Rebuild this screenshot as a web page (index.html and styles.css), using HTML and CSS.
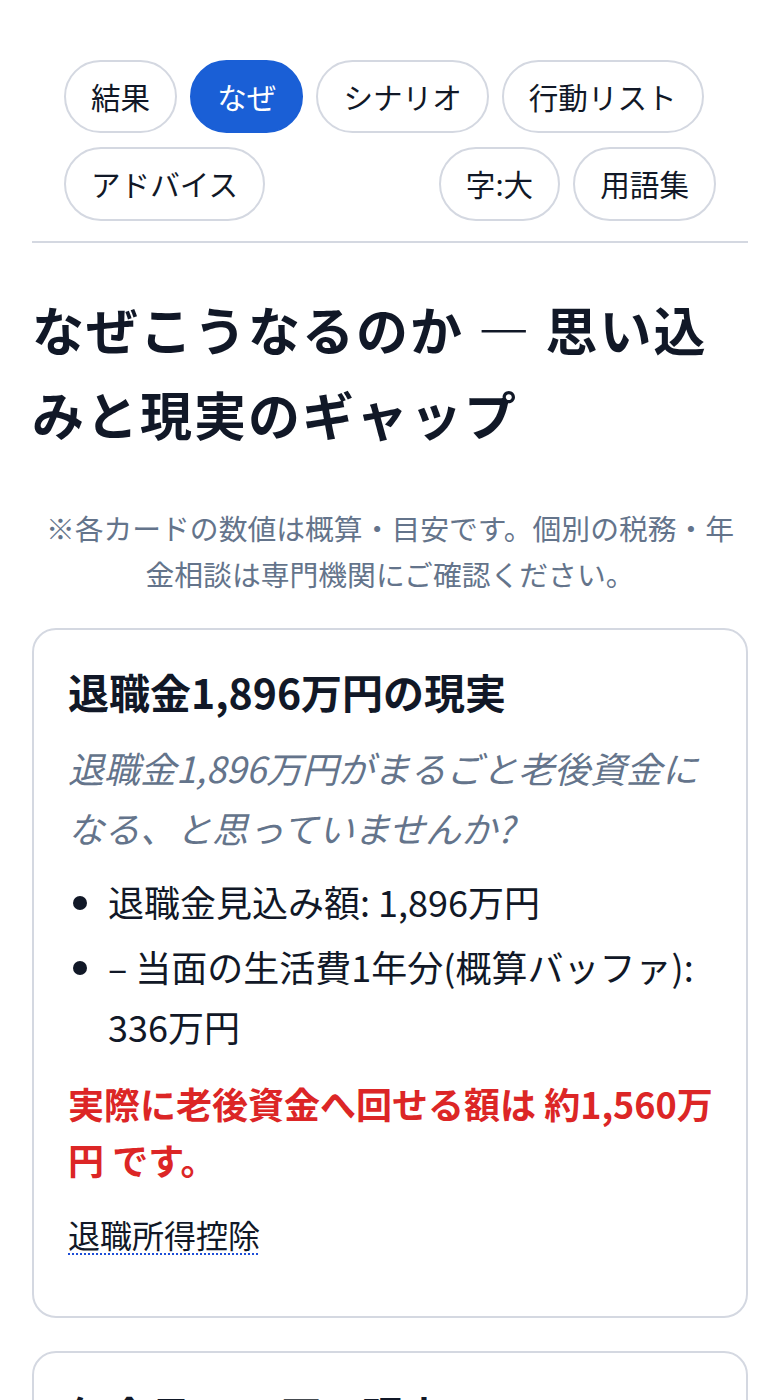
FILE: index.html
```html
<!DOCTYPE html>
<html lang="ja">
<head>
    <meta charset="UTF-8">
    <meta name="viewport" content="width=device-width, initial-scale=1.0">
    <title>なぜこうなるのか</title>
    <link rel="stylesheet" href="styles.css">
</head>
<body>
    <div class="page">
        <nav class="tabs">
            <button class="tab">結果</button>
            <button class="tab active">なぜ</button>
            <button class="tab">シナリオ</button>
            <button class="tab">行動リスト</button>
            <button class="tab">アドバイス</button>
            <button class="tab tool-first">字:大</button>
            <button class="tab">用語集</button>
        </nav>

        <h1 class="title">なぜこうなるのか — 思い込みと現実のギャップ</h1>

        <p class="note">※各カードの数値は概算・目安です。個別の税務・年金相談は専門機関にご確認ください。</p>

        <section class="card">
            <h2 class="card-title">退職金1,896万円の現実</h2>
            <p class="belief">退職金1,896万円がまるごと老後資金になる、と思っていませんか?</p>
            <ul class="facts">
                <li>退職金見込み額: 1,896万円</li>
                <li>– 当面の生活費1年分(概算バッファ): 336万円</li>
            </ul>
            <p class="reality">実際に老後資金へ回せる額は 約1,560万円 です。</p>
            <p class="terms"><a class="term" href="#">退職所得控除</a></p>
        </section>

        <section class="card">
            <h2 class="card-title">年金月16万円の現実</h2>
            <p class="belief">年金だけで生活費がまかなえる、と思っていませんか?</p>
        </section>
    </div>
</body>
</html>
```

FILE: styles.css
```css
body {
    margin: 0;
    background-color: #fff;
    color: #111827;
    font-family: "Noto Sans CJK JP", "Noto Sans", sans-serif;
}

.page {
    padding: 60px 32px 40px;
}

.tabs {
    display: flex;
    flex-wrap: wrap;
    gap: 14px 13px;
    padding: 0 32px 20px;
    border-bottom: 2px solid #d4d8e1;
}

.tab {
    font-family: inherit;
    font-size: 29.6px;
    line-height: 1.5;
    color: #111827;
    background-color: #fff;
    border: 2px solid #d4d8e1;
    border-radius: 999px;
    padding: 12.5px 25px;
    cursor: pointer;
}

.tab.active {
    background-color: #1a5fd6;
    border-color: #1a5fd6;
    color: #fff;
}

.tool-first {
    margin-left: auto;
}

.title {
    margin: 43px 0 0;
    font-size: 52px;
    line-height: 85px;
    letter-spacing: 2px;
    font-weight: 700;
    color: #111827;
}

.note {
    margin: 49px 0 0;
    font-size: 28.8px;
    line-height: 46px;
    color: #64748b;
    text-align: center;
}

.card {
    margin-top: 31px;
    border: 2px solid #d4d8e1;
    border-radius: 24px;
    padding: 33px 30px 42px 34px;
}

.card + .card {
    margin-top: 33px;
}

.card-title {
    margin: 0 0 18px;
    font-size: 41px;
    line-height: 56px;
    font-weight: 700;
}

.belief {
    margin: 0;
    font-size: 36px;
    line-height: 60px;
    font-style: italic;
    color: #64748b;
}

.facts {
    margin: 14px 0 0;
    padding-left: 40px;
    font-size: 36px;
    line-height: 60px;
}

.facts li {
    margin-bottom: 5px;
}

.reality {
    margin: 19px 0 0;
    font-size: 36px;
    line-height: 56px;
    font-weight: 700;
    color: #dc2626;
}

.terms {
    margin: 21px 0 14px;
    font-size: 32px;
    line-height: 52px;
}

.term {
    color: #111827;
    text-decoration: underline dotted #1d4ed8;
    text-decoration-thickness: 2px;
    text-underline-offset: 6px;
}
```
